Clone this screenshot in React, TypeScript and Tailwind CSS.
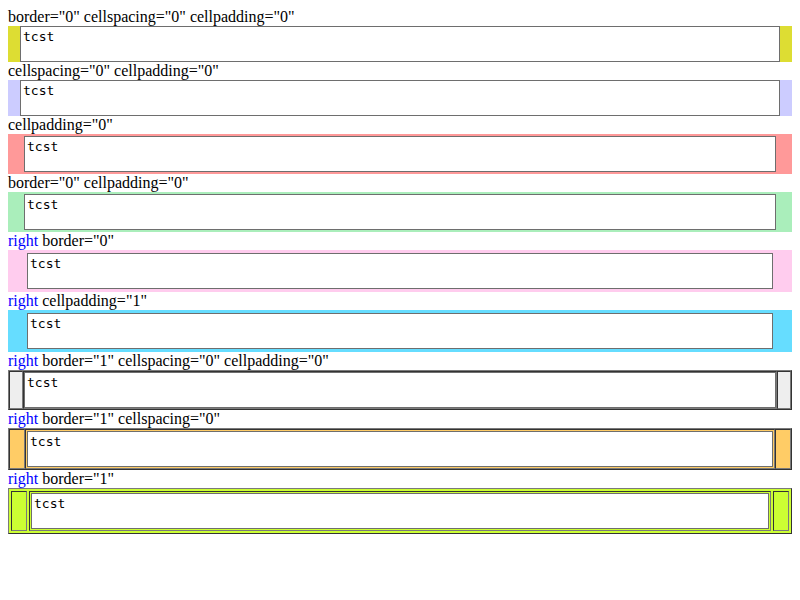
import React from 'react';

type Row = {
  label: string;
  right?: boolean;
  wrap: string;
  cell: string;
  mid: string;
};

const outset = 'border border-t-[#7a7a7a] border-l-[#7a7a7a] border-b-[#333333] border-r-[#333333]';
const inset = 'border border-t-[#333333] border-l-[#333333] border-b-[#7a7a7a] border-r-[#7a7a7a]';

const rows: Row[] = [
  { label: 'border="0" cellspacing="0" cellpadding="0"', wrap: 'bg-[#dddd33]', cell: 'w-3', mid: '' },
  { label: 'cellspacing="0" cellpadding="0"', wrap: 'bg-[#ccccff]', cell: 'w-3', mid: '' },
  { label: 'cellpadding="0"', wrap: 'gap-[2px] p-[2px] bg-[#ff9999]', cell: 'w-3', mid: '' },
  { label: 'border="0" cellpadding="0"', wrap: 'gap-[2px] p-[2px] bg-[#aaeebb]', cell: 'w-3', mid: '' },
  { label: 'border="0"', right: true, wrap: 'gap-[2px] p-[2px] bg-[#ffccee]', cell: 'w-[14px]', mid: 'p-px' },
  { label: 'cellpadding="1"', right: true, wrap: 'gap-[2px] p-[2px] bg-[#66ddff]', cell: 'w-[14px]', mid: 'p-px' },
  { label: 'border="1" cellspacing="0" cellpadding="0"', right: true, wrap: `${outset} bg-[#eeeeee]`, cell: `w-[14px] ${inset}`, mid: inset },
  { label: 'border="1" cellspacing="0"', right: true, wrap: `${outset} bg-[#ffcc66]`, cell: `w-4 ${inset}`, mid: `p-px ${inset}` },
  { label: 'border="1"', right: true, wrap: `${outset} gap-[2px] p-[2px] bg-[#ccff33]`, cell: `w-4 ${inset}`, mid: `p-px ${inset}` },
];

export default function App() {
  return (
    <div className="p-2 font-['Liberation_Serif',serif] text-[16px] leading-[18px] text-black bg-white min-h-[600px]">
      {rows.map((r, i) => (
        <div key={i}>
          <div className="h-[18px] whitespace-pre">
            {r.right && <span className="text-[#0000ff]">right </span>}
            {r.label}
          </div>
          <div className={`flex ${r.wrap}`}>
            <div className={`shrink-0 ${r.cell}`} />
            <div className={`flex-1 min-w-0 ${r.mid}`}>
              <textarea
                defaultValue="tcst"
                className="block h-9 w-full border border-[#6e6e6e] bg-white px-[2px] py-[2px] font-['DejaVu_Sans_Mono',monospace] text-[13px] leading-[15px] text-black resize-none"
              />
            </div>
            <div className={`shrink-0 ${r.cell}`} />
          </div>
        </div>
      ))}
    </div>
  );
}
